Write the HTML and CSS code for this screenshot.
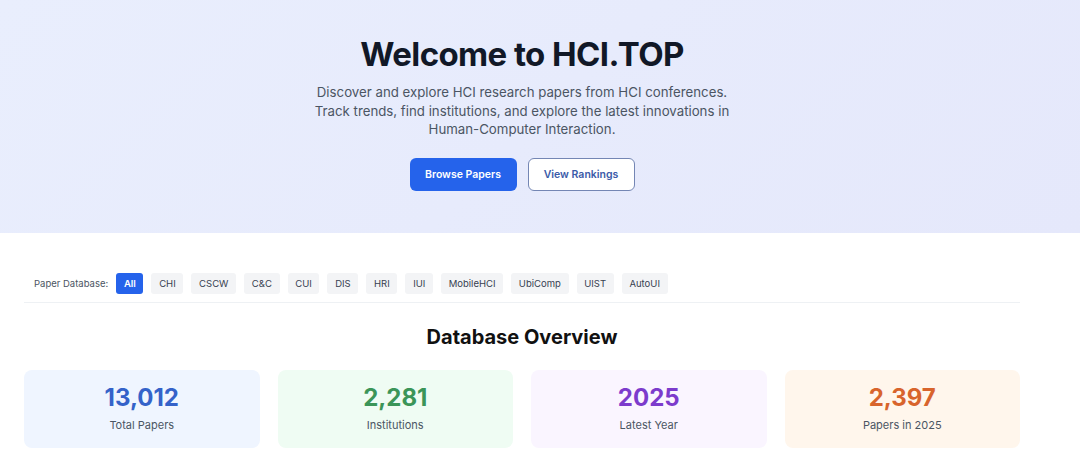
FILE: index.html
```html
<!DOCTYPE html>
<html lang="en">
<head>
    <meta charset="UTF-8">
    <meta name="viewport" content="width=device-width, initial-scale=1.0">
    <title>HCI.TOP</title>
    <link rel="stylesheet" href="styles.css">
</head>
<body>
    <section class="hero">
        <h1>Welcome to HCI.TOP</h1>
        <p class="lead">
            Discover and explore HCI research papers from HCI conferences.
            Track trends, find institutions, and explore the latest innovations in
            Human-Computer Interaction.
        </p>
        <div class="hero-actions">
            <a class="btn btn-primary" href="#">Browse Papers</a>
            <a class="btn btn-outline" href="#">View Rankings</a>
        </div>
    </section>

    <main class="content">
        <div class="db-filter">
            <span class="db-label">Paper Database:</span>
            <button class="db-tab active">All</button>
            <button class="db-tab">CHI</button>
            <button class="db-tab">CSCW</button>
            <button class="db-tab">C&amp;C</button>
            <button class="db-tab">CUI</button>
            <button class="db-tab">DIS</button>
            <button class="db-tab">HRI</button>
            <button class="db-tab">IUI</button>
            <button class="db-tab">MobileHCI</button>
            <button class="db-tab">UbiComp</button>
            <button class="db-tab">UIST</button>
            <button class="db-tab">AutoUI</button>
        </div>

        <h2 class="section-title">Database Overview</h2>

        <div class="stats">
            <div class="stat stat-blue">
                <div class="stat-value">13,012</div>
                <div class="stat-label">Total Papers</div>
            </div>
            <div class="stat stat-green">
                <div class="stat-value">2,281</div>
                <div class="stat-label">Institutions</div>
            </div>
            <div class="stat stat-purple">
                <div class="stat-value">2025</div>
                <div class="stat-label">Latest Year</div>
            </div>
            <div class="stat stat-orange">
                <div class="stat-value">2,397</div>
                <div class="stat-label">Papers in 2025</div>
            </div>
        </div>
    </main>
</body>
</html>
```

FILE: styles.css
```css
* {
    margin: 0;
    padding: 0;
    box-sizing: border-box;
}

body {
    font-family: Inter, "Noto Sans", sans-serif;
    background: #fff;
    color: #111827;
}

/* top banner */
.hero {
    height: 233px;
    padding: 34px 36px 0 0;
    background: linear-gradient(135deg, #e9eefd 0%, #e5e8fb 100%);
    text-align: center;
}

.hero h1 {
    font-size: 33px;
    font-weight: 700;
    line-height: 40px;
    color: #111827;
    letter-spacing: -0.6px;
}

.lead {
    max-width: 430px;
    margin: 9px auto 0;
    font-size: 13.25px;
    line-height: 18.5px;
    color: #4b5563;
}

.hero-actions {
    display: flex;
    justify-content: center;
    gap: 11px;
    margin-top: 19px;
}

.btn {
    display: inline-flex;
    align-items: center;
    justify-content: center;
    width: 107px;
    height: 33px;
    border-radius: 6px;
    font-size: 10.5px;
    font-weight: 600;
    text-decoration: none;
}

.btn-primary {
    background: #2563eb;
    color: #fff;
}

.btn-outline {
    background: #fff;
    color: #3a5aa8;
    border: 1px solid #7486b4;
}

/* main area */
.content {
    padding: 40px 60px 0 24px;
}

.db-filter {
    display: flex;
    align-items: center;
    gap: 8px;
    padding: 0 10px 8px;
    border-bottom: 1px solid #eef1f4;
}

.db-label {
    font-size: 9.5px;
    color: #4b5563;
}

.db-tab {
    height: 21px;
    padding: 0 7.7px;
    border: none;
    border-radius: 3px;
    background: #f3f4f6;
    color: #374151;
    font-family: inherit;
    font-size: 9.5px;
    cursor: pointer;
}

.db-tab.active {
    background: #2563eb;
    color: #fff;
    font-weight: 600;
}

.section-title {
    margin-top: 21px;
    text-align: center;
    font-size: 20px;
    font-weight: 700;
    line-height: 26px;
    color: #111;
}

.stats {
    display: grid;
    grid-template-columns: repeat(4, 1fr);
    gap: 18px;
    margin-top: 20px;
}

.stat {
    height: 78px;
    border-radius: 8px;
    display: flex;
    flex-direction: column;
    align-items: center;
    padding-top: 13px;
}

.stat-value {
    font-size: 24px;
    font-weight: 700;
    line-height: 30px;
}

.stat-label {
    margin-top: 5px;
    font-size: 11px;
    color: #4b5563;
}

.stat-blue { background: #eff5ff; }
.stat-blue .stat-value { color: #3462c9; }

.stat-green { background: #effcf3; }
.stat-green .stat-value { color: #3b9558; }

.stat-purple { background: #faf5ff; }
.stat-purple .stat-value { color: #7c3bcc; }

.stat-orange { background: #fff6ec; }
.stat-orange .stat-value { color: #d8642c; }
```
